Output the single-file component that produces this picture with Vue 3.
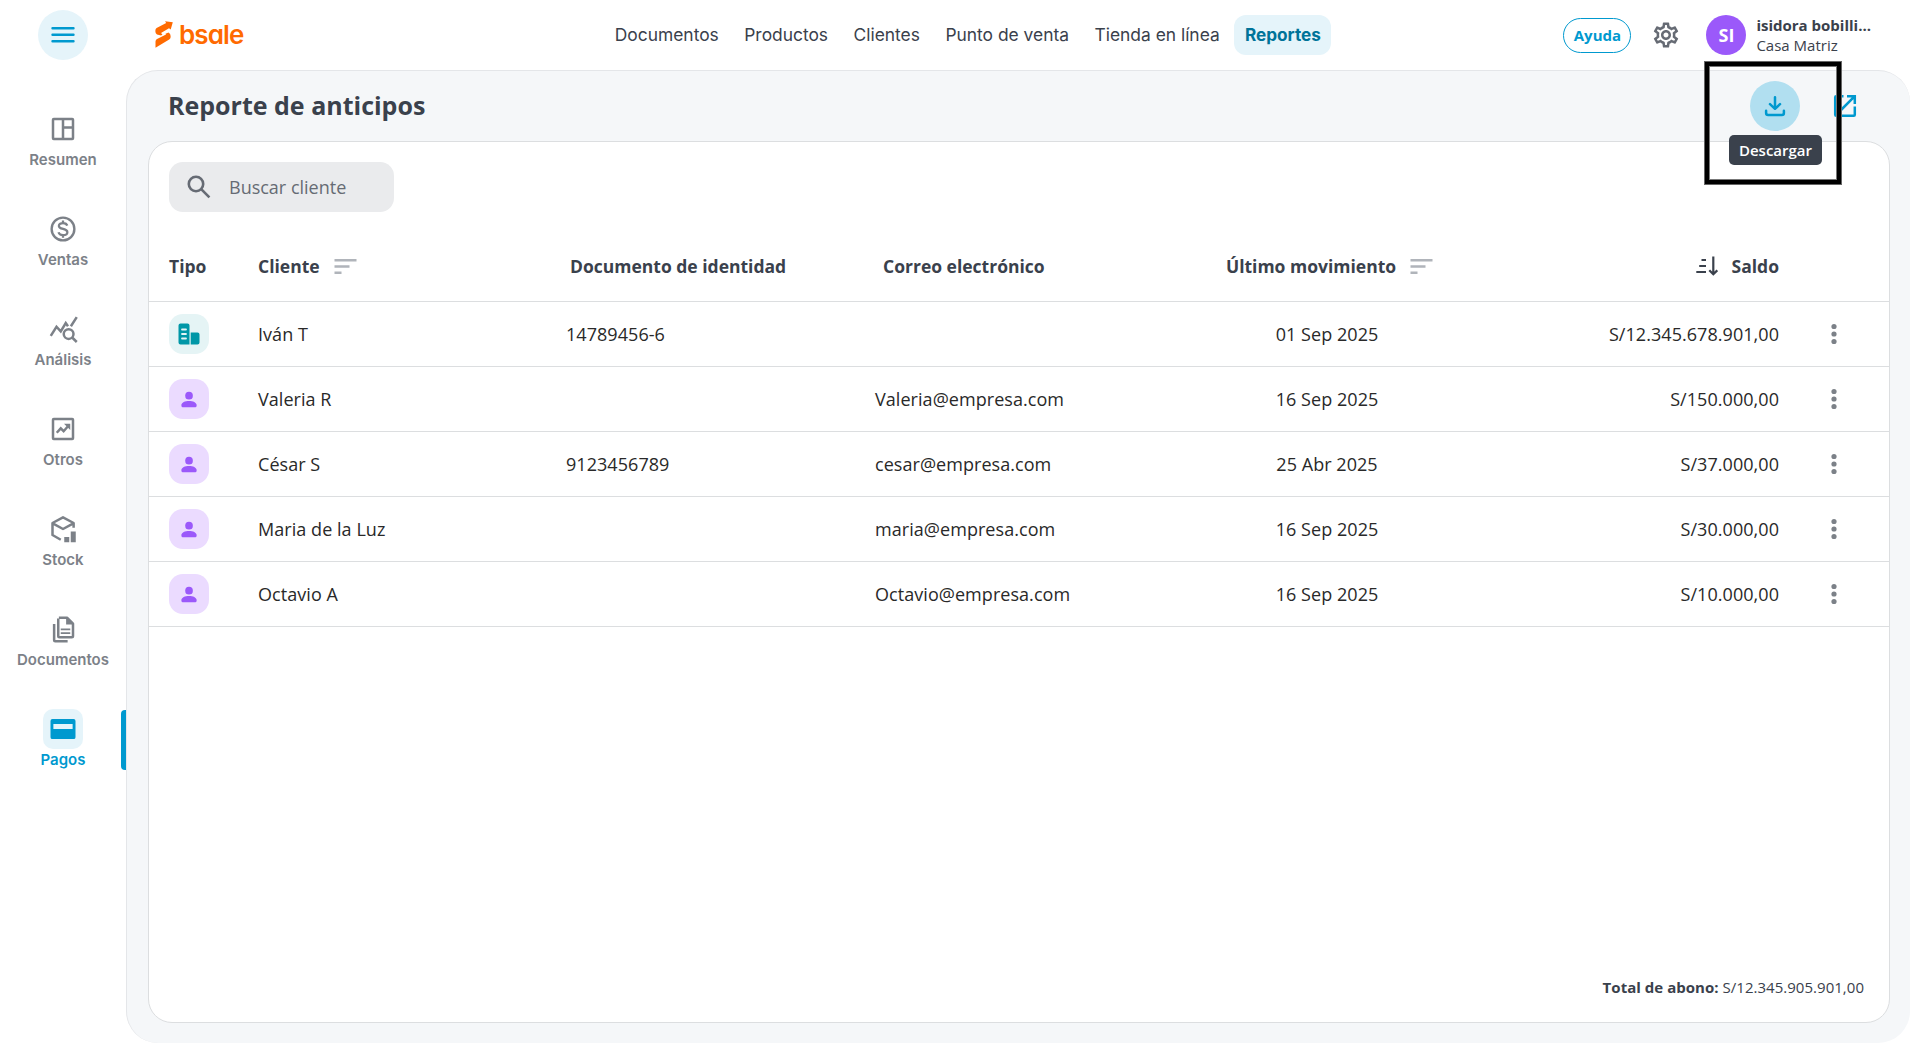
<template>
  <div class="app">
    <aside class="sidebar">
      <button class="menu-btn" aria-label="Menu">
        <svg width="24" height="18" viewBox="0 0 24 18">
          <path d="M1.5 2.2h21M1.5 8.7h21M1.5 15.2h21" stroke="currentColor" stroke-width="2.4" stroke-linecap="round" />
        </svg>
      </button>
      <nav class="side-nav">
        <a v-for="item in sideItems" :key="item.label" class="side-item" :class="{ active: item.active }">
          <span class="side-icon">
            <svg width="30" height="30" viewBox="0 0 24 24" fill="none" stroke="currentColor" stroke-width="2" v-html="item.icon"></svg>
          </span>
          <span class="side-label">{{ item.label }}</span>
        </a>
      </nav>
    </aside>

    <div class="content">
      <header class="topbar">
        <div class="logo">
          <svg width="18" height="28" viewBox="0 0 18 28" fill="#ff6a00">
            <path d="M10 .2 17.800 1.200 15.700 8.600 14 7.200 6 12 7.500 13.500 6 14.500 2 13.500Q.4 12.600.4 10.800V9.200Q.4 7.800 1.600 7L11.200 1.900z" />
            <path d="M13.500 11.500Q15.700 12.700 15.600 15V16.200Q15.500 17.700 14.200 18.500L.5 26.700V20.500Q.6 18.700 2 17.900L11 13.500 10.500 12.800z" />
          </svg>
          <span class="logo-text">bsale</span>
        </div>
        <nav class="top-nav">
          <a v-for="link in topLinks" :key="link" class="top-link" :class="{ active: link === 'Reportes' }">{{ link }}</a>
        </nav>
        <div class="user-area">
          <button class="help-btn">Ayuda</button>
          <svg class="gear" width="30" height="30" viewBox="0 0 24 24" fill="currentColor">
            <path d="M19.43 12.98c.04-.32.07-.64.07-.98 0-.34-.03-.66-.07-.98l2.110-1.650c.19-.15.24-.42.12-.64l-2-3.460c-.09-.16-.26-.25-.44-.25-.06 0-.12.01-.17.03l-2.490 1c-.52-.4-1.080-.73-1.690-.98l-.38-2.650C14.460 2.180 14.250 2 14 2h-4c-.25 0-.46.18-.49.42l-.38 2.650c-.61.25-1.170.59-1.690.98l-2.490-1c-.06-.02-.12-.03-.18-.03-.17 0-.34.09-.43.25l-2 3.460c-.13.22-.07.49.12.64l2.110 1.650c-.04.32-.07.65-.07.98 0 .33.03.66.07.98l-2.110 1.650c-.19.15-.24.42-.12.64l2 3.460c.09.16.26.25.44.25.06 0 .12-.01.17-.03l2.490-1c.52.4 1.080.73 1.690.98l.38 2.650c.03.24.24.42.49.42h4c.25 0 .46-.18.49-.42l.38-2.650c.61-.25 1.170-.59 1.690-.98l2.490 1c.06.02.12.03.18.03.17 0 .34-.09.43-.25l2-3.460c.12-.22.07-.49-.12-.64l-2.110-1.650zm-1.980-1.710c.04.31.05.52.05.73 0 .21-.02.43-.05.73l-.14 1.130.89.7 1.080.84-.7 1.210-1.270-.51-1.040-.42-.9.68c-.43.32-.84.56-1.250.73l-1.060.43-.16 1.130-.2 1.350h-1.400l-.19-1.350-.16-1.130-1.060-.43c-.43-.18-.83-.41-1.230-.71l-.91-.7-1.060.43-1.270.51-.7-1.210 1.080-.84.89-.7-.14-1.130c-.03-.31-.05-.54-.05-.74s.02-.43.05-.73l.14-1.130-.89-.7-1.080-.84.7-1.210 1.270.51 1.040.42.9-.68c.43-.32.84-.56 1.250-.73l1.060-.43.16-1.130.2-1.350h1.390l.19 1.350.16 1.130 1.060.43c.43.18.83.41 1.230.71l.91.7 1.060-.43 1.270-.51.7 1.210-1.070.85-.89.7.14 1.130zM12 8c-2.210 0-4 1.790-4 4s1.790 4 4 4 4-1.790 4-4-1.790-4-4-4zm0 6c-1.100 0-2-.9-2-2s.9-2 2-2 2 .9 2 2-.9 2-2 2z" />
          </svg>
          <span class="avatar">SI</span>
          <div class="user-info">
            <span class="user-name">isidora bobilli...</span>
            <span class="user-office">Casa Matriz</span>
          </div>
        </div>
      </header>

      <main class="main">
        <div class="page-head">
          <h1>Reporte de anticipos</h1>
          <div class="actions">
            <div class="download-wrap">
              <button class="download-btn" aria-label="Descargar">
                <svg width="22" height="22" viewBox="0 0 22 22" fill="none" stroke="currentColor" stroke-width="2.500" stroke-linecap="round" stroke-linejoin="round">
                  <path d="M11 2.300v11.300M6 9.200l5 4.600 5-4.600M2.100 15.800v2.200q0 2 2 2h13.800q2 0 2-2v-2.200" />
                </svg>
              </button>
              <span class="tooltip">Descargar</span>
              <span class="highlight"></span>
            </div>
            <svg class="open-icon" width="24" height="24" viewBox="0 0 24 24" fill="none" stroke="currentColor" stroke-width="2.500">
              <path d="M10.500 2.200H3.200q-1 0-1 1v17.600q0 1 1 1h17.600q1 0 1-1V12.500" />
              <path d="M14 2.200h7.800V10M21.300 2.700 8 16" />
            </svg>
          </div>
        </div>

        <section class="card">
          <label class="search">
            <svg width="24" height="24" viewBox="0 0 24 24" fill="none" stroke="currentColor" stroke-width="2.600">
              <circle cx="9" cy="9" r="7.200" />
              <path d="M14.200 14.200l8.200 8.200" />
            </svg>
            <span>Buscar cliente</span>
          </label>

          <div class="table">
            <div class="row head">
              <span>Tipo</span>
              <span class="sortable">Cliente
                <svg class="sort" width="23" height="17" viewBox="0 0 23 17"><path d="M.5 2.300h22M.5 8.500h15M.5 14.700h7" /></svg>
              </span>
              <span class="h-doc">Documento de identidad</span>
              <span class="h-mail">Correo electrónico</span>
              <span class="sortable h-date">Último movimiento
                <svg class="sort" width="23" height="17" viewBox="0 0 23 17"><path d="M.5 2.300h22M.5 8.500h15M.5 14.700h7" /></svg>
              </span>
              <span class="sortable h-balance">
                <svg width="22" height="20" viewBox="0 0 22 20" fill="none" stroke="currentColor" stroke-width="2.200">
                  <path d="M5.500 4H10M3.200 10H10M.3 16H10" />
                  <path d="M17.300.5v17.500M13.300 14.300l4 4 4-4" />
                </svg>
                Saldo
              </span>
              <span></span>
            </div>
            <div v-for="row in rows" :key="row.name" class="row">
              <span>
                <span class="badge" :class="row.type">
                  <svg v-if="row.type === 'company'" width="22" height="22" viewBox="0 0 22 22">
                    <path fill="currentColor" d="M2.500.5h7Q11.500.5 11.500 2.500v19h-9q-2 0-2-2v-17Q.5.5 2.500.5zM12.700 9.500h6.800q2 0 2 2v8q0 2-2 2h-6.800z" />
                    <path stroke="#e5f4f5" stroke-width="1.800" stroke-linecap="round" d="M4 6.500h4M4 11h4M4 15.500h4" />
                  </svg>
                  <svg v-else width="23" height="23" viewBox="0 0 24 24" fill="currentColor">
                    <circle cx="11.500" cy="8" r="4" />
                    <path d="M3.500 18c0-3 4-4.500 8-4.500s8 1.500 8 4.500q0 2-1.200 2H4.700q-1.200 0-1.200-2z" />
                  </svg>
                </span>
              </span>
              <span>{{ row.name }}</span>
              <span>{{ row.doc }}</span>
              <span>{{ row.mail }}</span>
              <span class="date">{{ row.date }}</span>
              <span class="balance">{{ row.balance }}</span>
              <span class="more">
                <svg width="6" height="22" viewBox="0 0 6 22" fill="currentColor">
                  <circle cx="3" cy="3.500" r="2.600" /><circle cx="3" cy="11" r="2.600" /><circle cx="3" cy="18.500" r="2.600" />
                </svg>
              </span>
            </div>
          </div>

          <footer class="total"><b>Total de abono:</b> S/12.345.905.901,00</footer>
        </section>
      </main>
    </div>
  </div>
</template>

<script setup>
const topLinks = ['Documentos', 'Productos', 'Clientes', 'Punto de venta', 'Tienda en línea', 'Reportes']

const sideItems = [
  {
    label: 'Resumen',
    icon: '<rect x="4" y="4" width="16" height="16" rx=".6"/><path d="M12 4v16M12 10.800h8"/>'
  },
  {
    label: 'Ventas',
    icon: '<circle cx="12" cy="12" r="9.100" stroke-width="1.900"/><path stroke-width="1.800" d="M15.400 9.300C15 7.800 13.700 7.200 12 7.200s-3.300.7-3.300 2.300c0 3.300 6.800 1.600 6.800 5 0 1.600-1.600 2.400-3.500 2.400-1.800 0-3.200-.8-3.600-2.300M12 5.200v2M12 16.900v2"/>'
  },
  {
    label: 'Análisis',
    icon: '<path stroke-width="2" d="M2.200 17.500 6.800 10.200l3.400 3.700 4-6.700 1.800 2.600M18.300 9.800 23 2.500"/><circle cx="16.500" cy="16" r="3.900" stroke-width="2"/><path stroke-width="2" d="M19.300 18.800l3.700 3.600"/>'
  },
  {
    label: 'Otros',
    icon: '<rect x="4" y="4" width="16" height="16" rx=".6"/><path d="M7 15l3.200-3.500 2.300 2.300 3.500-4"/><path fill="currentColor" stroke="none" d="M12.800 7.700h5v5z"/>'
  },
  {
    label: 'Stock',
    icon: '<path stroke-width="2" stroke-linejoin="round" d="M20.500 11V7.200L12 2.700 3.600 7.200v9.600l6.600 3.800M3.800 7.500 12 12l8.300-4.500"/><path fill="currentColor" stroke="none" d="M13 18.300h4v4.200h-4zM18.200 14h4v8.500h-4z"/>'
  },
  {
    label: 'Documentos',
    icon: '<path stroke-width="2" stroke-linejoin="round" d="M8.700 3h6.500L20 7.800V17.500q0 1-1 1H9.200q-1 0-1-1V3.500"/><path fill="currentColor" stroke="none" d="M14.500 2.500v5.800h6z"/><path stroke-width="2" d="M4.900 8v13q0 .8.8.8h10"/><path stroke-width="1.400" d="M10.200 12.200h7.600M10.200 15.300h7.600"/>'
  },
  {
    label: 'Pagos',
    active: true,
    icon: '<path fill="currentColor" stroke="none" d="M3.500 4h17Q22 4 22 5.500v13q0 1.500-1.500 1.500h-17Q2 20 2 18.500v-13Q2 4 3.500 4zM4.300 8v4h15.400V8z" fill-rule="evenodd"/>'
  }
]

const rows = [
  { type: 'company', name: 'Iván T', doc: '14789456-6', mail: '', date: '01 Sep 2025', balance: 'S/12.345.678.901,00' },
  { type: 'person', name: 'Valeria R', doc: '', mail: 'Valeria@empresa.com', date: '16 Sep 2025', balance: 'S/150.000,00' },
  { type: 'person', name: 'César S', doc: '9123456789', mail: 'cesar@empresa.com', date: '25 Abr 2025', balance: 'S/37.000,00' },
  { type: 'person', name: 'Maria de la Luz', doc: '', mail: 'maria@empresa.com', date: '16 Sep 2025', balance: 'S/30.000,00' },
  { type: 'person', name: 'Octavio A', doc: '', mail: 'Octavio@empresa.com', date: '16 Sep 2025', balance: 'S/10.000,00' }
]
</script>

<style>
body {
  margin: 0;
  background: #fff;
}
</style>

<style scoped>
.app {
  display: flex;
  height: 100vh;
  overflow: hidden;
  font-family: 'Open Sans', sans-serif;
  color: #3a414c;
}

.app * {
  box-sizing: border-box;
}

button {
  padding: 0;
  border: none;
  font-family: inherit;
}

/* sidebar */
.sidebar {
  width: 126px;
  flex-shrink: 0;
  display: flex;
  flex-direction: column;
  align-items: center;
  padding-top: 10px;
}

.menu-btn {
  width: 50px;
  height: 50px;
  border-radius: 50%;
  background: #e5f4fa;
  color: #0099cf;
  display: flex;
  align-items: center;
  justify-content: center;
}

.side-nav {
  width: 100%;
  margin-top: 50px;
  display: flex;
  flex-direction: column;
  gap: 40px;
}

.side-item {
  position: relative;
  height: 60px;
  display: flex;
  flex-direction: column;
  align-items: center;
  color: #7c8188;
  font: 600 15px/20px 'Inter', sans-serif;
}

.side-item.active {
  color: #0099cf;
}

.side-item.active::after {
  content: '';
  position: absolute;
  top: 0;
  right: 0;
  width: 5px;
  height: 60px;
  border-radius: 4px 0 0 4px;
  background: #0099cf;
}

.side-icon {
  width: 40px;
  height: 40px;
  margin-top: -1px;
  border-radius: 10px;
  display: flex;
  align-items: center;
  justify-content: center;
}

.side-label {
  margin-top: 1px;
}

.active .side-icon {
  background: #e5f4fa;
}

/* top bar */
.content {
  flex: 1;
  min-width: 0;
  display: flex;
  flex-direction: column;
}

.topbar {
  height: 70px;
  flex-shrink: 0;
  display: flex;
  align-items: center;
  padding: 0 39px 0 29px;
}

.logo {
  width: 447px;
  flex-shrink: 0;
  display: flex;
  align-items: center;
  gap: 6px;
}

.logo-text {
  font: 600 26px/28px 'Inter', sans-serif;
  font-feature-settings: 'cv11';
  letter-spacing: -0.9px;
  color: #ff6a00;
}

.top-nav {
  display: flex;
}

.top-link {
  height: 40px;
  padding: 0 12.7px 0 12.8px;
  border-radius: 12px;
  font: 400 17.4px/40px 'Inter', sans-serif;
  white-space: nowrap;
}

.top-link.active {
  margin-left: 2px;
  padding: 0 10.5px;
  background: #e5f4fa;
  color: #007399;
  font-size: 17.2px;
  font-weight: 700;
}

.user-area {
  margin-left: auto;
  display: flex;
  align-items: center;
}

.help-btn {
  width: 68px;
  height: 35px;
  border: 1px solid #0099cf;
  border-radius: 18px;
  background: #fff;
  color: #0099cf;
  font-size: 15px;
  font-weight: 700;
}

.gear {
  margin-left: 20px;
  color: #666b74;
}

.avatar {
  width: 40px;
  height: 40px;
  margin-left: 25px;
  border-radius: 50%;
  background: #9b59fa;
  color: #fff;
  font-size: 18px;
  font-weight: 700;
  line-height: 40px;
  text-align: center;
}

.user-info {
  margin-left: 10px;
  display: flex;
  flex-direction: column;
  font-size: 15px;
  line-height: 20px;
}

.user-name {
  font-weight: 700;
}

/* page */
.main {
  flex: 1;
  min-height: 0;
  display: flex;
  flex-direction: column;
  padding: 0 20px 20px 21px;
  border: 1px solid #e4e6e9;
  border-right: none;
  border-bottom: none;
  border-radius: 32px;
  background: #f5f7f9;
}

.page-head {
  height: 70px;
  display: flex;
  align-items: center;
  justify-content: space-between;
  padding: 0 33px 0 20px;
}

h1 {
  margin: 0 0 2px;
  font-size: 25px;
  font-weight: 700;
}

.actions {
  display: flex;
  align-items: center;
  gap: 33px;
  color: #0099cf;
}

.download-wrap {
  position: relative;
}

.download-btn {
  width: 50px;
  height: 50px;
  border-radius: 50%;
  background: #b1dff0;
  color: #0099cf;
  display: flex;
  align-items: center;
  justify-content: center;
}

.tooltip {
  position: absolute;
  top: 54px;
  left: -21px;
  z-index: 2;
  width: 93px;
  height: 30px;
  border-radius: 5px;
  background: #3a414c;
  color: #fff;
  font-size: 15px;
  font-weight: 600;
  line-height: 31px;
  text-align: center;
}

.highlight {
  position: absolute;
  top: -20px;
  left: -46px;
  z-index: 3;
  width: 138px;
  height: 124px;
  border: 5px solid #000;
  outline: 1px solid #666;
  outline-offset: -1px;
  box-shadow: inset 0 0 0 1px #777;
}

.card {
  flex: 1;
  min-height: 0;
  display: flex;
  flex-direction: column;
  border: 1px solid #dcdee0;
  border-radius: 24px;
  background: #fff;
}

.search {
  width: 225px;
  height: 50px;
  margin: 20px 0 0 20px;
  padding-left: 18px;
  display: flex;
  align-items: center;
  gap: 18px;
  border-radius: 14px;
  background: #eaebed;
  color: #666b74;
  font-size: 18px;
}

.table {
  margin-top: 20px;
}

.row {
  height: 65px;
  display: grid;
  grid-template-columns: 89px 308px 309px 325px 254px 325px 1fr;
  align-items: center;
  padding-left: 20px;
  border-bottom: 1px solid #dcdee0;
  color: #292929;
  font-size: 18px;
  letter-spacing: 0.05px;
}

.row.head {
  height: 70px;
  padding-bottom: 1px;
  color: #3a414c;
  font-size: 17.5px;
  font-weight: 700;
  letter-spacing: 0;
}

.sortable {
  display: flex;
  align-items: center;
  gap: 14px;
}

.sort path {
  stroke: #b0b4ba;
  stroke-width: 2.4;
}

.h-doc {
  padding-left: 4px;
}

.h-mail {
  padding-left: 8px;
}

.h-date {
  justify-content: center;
  padding-left: 5px;
}

.h-balance {
  justify-content: flex-end;
}

.date {
  text-align: center;
}

.balance {
  text-align: right;
}

.badge {
  width: 40px;
  height: 40px;
  border-radius: 14px;
  display: flex;
  align-items: center;
  justify-content: center;
}

.badge.company {
  background: #e5f4f5;
  color: #0097a7;
}

.badge.person {
  background: #ebdbff;
  color: #9b59fa;
}

.more {
  display: flex;
  justify-content: center;
  color: #7c8188;
}

.total {
  margin-top: auto;
  padding: 0 25px 25px 0;
  font-size: 15px;
  line-height: 20px;
  letter-spacing: 0.03px;
  text-align: right;
}
</style>
